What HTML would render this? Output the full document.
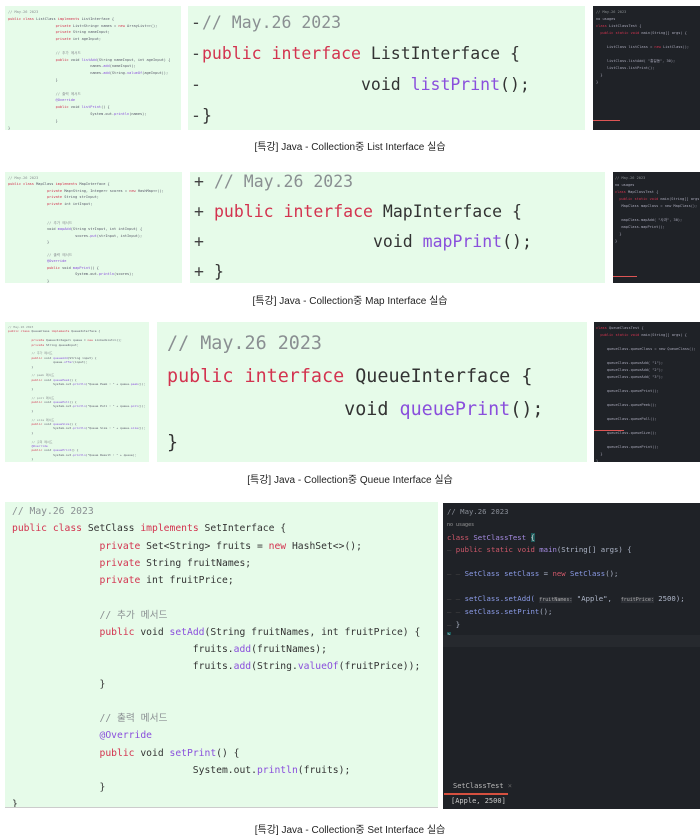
<!DOCTYPE html>
<html><head><meta charset="utf-8"><style>
*{margin:0;padding:0;box-sizing:border-box}
body{width:700px;height:840px;background:#fff;position:relative;overflow:hidden;font-family:"DejaVu Sans Mono","Liberation Mono",monospace}
.p{position:absolute;background:#e6fbe9;overflow:hidden}
.d{position:absolute;background:#1f2227;overflow:hidden}
.t{position:absolute;white-space:pre;line-height:1}
.k{color:#d3334f}.m{color:#8a4fdc}.c{color:#8a8f92}.x{color:#333}
.cap{position:absolute;left:0;width:700px;text-align:center;font-family:"Liberation Sans","Noto Sans CJK KR",sans-serif;font-size:10px;color:#222}
.s{font-size:3.6px;color:#556}
</style></head><body>

<!-- Row 1 -->
<div class="p" style="left:5px;top:6px;width:176px;height:124px">
<div class="t s" style="left:3px;top:3px;line-height:6.8px"><span class="c">// May.26 2023</span>
<span class="k">public class</span> ListClass <span class="k">implements</span> ListInterface {
                      <span class="k">private</span> List&lt;String&gt; names = <span class="k">new</span> ArrayList&lt;&gt;();
                      <span class="k">private</span> String nameInput;
                      <span class="k">private</span> int ageInput;

                      <span class="c">// 추가 메서드</span>
                      <span class="k">public</span> void <span class="m">listAdd</span>(String nameInput, int ageInput) {
                                      names.<span class="m">add</span>(nameInput);
                                      names.<span class="m">add</span>(String.<span class="m">valueOf</span>(ageInput));
                      }

                      <span class="c">// 출력 메서드</span>
                      <span class="m">@Override</span>
                      <span class="k">public</span> void <span class="m">listPrint</span>() {
                                      System.out.<span class="m">println</span>(names);
                      }
}</div></div>
<div class="p" style="left:188px;top:6px;width:397px;height:124px">
<div class="t" style="left:3px;top:1px;font-size:16.5px;line-height:31px;color:#444">-
-
-
-</div>
<div class="t" style="left:14px;top:1px;font-size:16.5px;line-height:31px;color:#444"><span class="c">// May.26 2023</span>
<span class="k">public interface</span> <span class="x">ListInterface {</span>
                <span class="x">void</span> <span class="m">listPrint</span><span class="x">();</span>
<span class="x">}</span></div></div>
<div class="d" style="left:593px;top:6px;width:107px;height:124px">
<div class="t s" style="left:3px;top:3px;line-height:7px;color:#aab"><span class="c">// May.26 2023</span>
no usages
<span class="k">class</span> ListClassTest {
  <span class="k">public static void</span> main(String[] args) {

     ListClass listClass = <span class="k">new</span> ListClass();

     listClass.listAdd( "홍길동", 30);
     listClass.listPrint();
  }
}</div>
<div style="position:absolute;left:0;top:114px;width:27px;height:1px;background:#d55"></div>
</div>
<div class="cap" style="top:138px">[특강] Java - Collection중 List Interface 실습</div>

<!-- Row 2 -->
<div class="p" style="left:5px;top:172px;width:177px;height:111px">
<div class="t s" style="left:3px;top:3px;line-height:6.4px"><span class="c">// May.26 2023</span>
<span class="k">public class</span> MapClass <span class="k">implements</span> MapInterface {
                  <span class="k">private</span> Map&lt;String, Integer&gt; scores = <span class="k">new</span> HashMap&lt;&gt;();
                  <span class="k">private</span> String strInput;
                  <span class="k">private</span> int intInput;


                  <span class="c">// 추가 메서드</span>
                  void <span class="m">mapAdd</span>(String strInput, int intInput) {
                               scores.<span class="m">put</span>(strInput, intInput);
                  }

                  <span class="c">// 출력 메서드</span>
                  <span class="m">@Override</span>
                  <span class="k">public</span> void <span class="m">mapPrint</span>() {
                               System.out.<span class="m">println</span>(scores);
                  }
}</div></div>
<div class="p" style="left:190px;top:172px;width:415px;height:111px">
<div class="t" style="left:4px;top:-5px;font-size:16.5px;line-height:30px;color:#444">+
+
+
+</div>
<div class="t" style="left:24px;top:-5px;font-size:16.5px;line-height:30px;color:#444"><span class="c">// May.26 2023</span>
<span class="k">public interface</span> <span class="x">MapInterface {</span>
                <span class="x">void</span> <span class="m">mapPrint</span><span class="x">();</span>
<span class="x">}</span></div></div>
<div class="d" style="left:613px;top:172px;width:87px;height:111px">
<div class="t s" style="left:2px;top:3px;line-height:7px;color:#aab"><span class="c">// May.26 2023</span>
no usages
<span class="k">class</span> MapClassTest {
  <span class="k">public static void</span> main(String[] args) {
   MapClass mapClass = new MapClass();

   mapClass.mapAdd( "사과", 30);
   mapClass.mapPrint();
  }
}</div>
<div style="position:absolute;left:0;top:104px;width:24px;height:1px;background:#d55"></div>
</div>
<div class="cap" style="top:292px">[특강] Java - Collection중 Map Interface 실습</div>

<!-- Row 3 -->
<div class="p" style="left:5px;top:322px;width:144px;height:140px">
<div class="t s" style="left:3px;top:3px;line-height:4.4px;font-size:3px"><span class="c">// May.26 2023</span>
<span class="k">public class</span> QueueClass <span class="k">implements</span> QueueInterface {

             <span class="k">private</span> Queue&lt;Integer&gt; queue = <span class="k">new</span> LinkedList&lt;&gt;();
             <span class="k">private</span> String queueInput;

             <span class="c">// 추가 메서드</span>
             <span class="k">public</span> void <span class="m">queueAdd</span>(String input) {
                         queue.<span class="m">offer</span>(input);
             }

             <span class="c">// peek 메서드</span>
             <span class="k">public</span> void <span class="m">queuePeek</span>() {
                         System.out.<span class="m">println</span>("Queue Peek : " + queue.<span class="m">peek</span>());
             }

             <span class="c">// poll 메서드</span>
             <span class="k">public</span> void <span class="m">queuePoll</span>() {
                         System.out.<span class="m">println</span>("Queue Poll : " + queue.<span class="m">poll</span>());
             }

             <span class="c">// size 메서드</span>
             <span class="k">public</span> void <span class="m">queueSize</span>() {
                         System.out.<span class="m">println</span>("Queue Size : " + queue.<span class="m">size</span>());
             }

             <span class="c">// 출력 메서드</span>
             <span class="m">@Override</span>
             <span class="k">public</span> void <span class="m">queuePrint</span>() {
                         System.out.<span class="m">println</span>("Queue Result : " + queue);
             }
}</div></div>
<div class="p" style="left:157px;top:322px;width:430px;height:140px">
<div class="t" style="left:10px;top:5px;font-size:18.4px;line-height:33px;color:#444"><span class="c">// May.26 2023</span>
<span class="k">public interface</span> <span class="x">QueueInterface {</span>
                <span class="x">void</span> <span class="m">queuePrint</span><span class="x">();</span>
<span class="x">}</span></div></div>
<div class="d" style="left:594px;top:322px;width:106px;height:140px">
<div class="t s" style="left:2px;top:3px;line-height:7px;color:#aab"><span class="k">class</span> QueueClassTest {
  <span class="k">public static void</span> main(String[] args) {

     queueClass.queueClass = new QueueClass();

     queueClass.queueAdd( "1");
     queueClass.queueAdd( "2");
     queueClass.queueAdd( "3");

     queueClass.queuePrint();

     queueClass.queuePeek();

     queueClass.queuePoll();

     queueClass.queueSize();

     queueClass.queuePrint();
  }
}
 QueueClassTest
 Queue Result : [1, 2, 3]
 Queue Peek : 1
 Queue Poll : 1
 Queue Size : 2
 Queue Result : [2, 3]</div>
<div style="position:absolute;left:0;top:108px;width:30px;height:1px;background:#d55"></div>
</div>
<div class="cap" style="top:471px">[특강] Java - Collection중 Queue Interface 실습</div>

<!-- Row 4 -->
<div class="p" style="left:5px;top:502px;width:433px;height:306px;border-bottom:1px solid #ccc">
<div class="t" style="left:7px;top:1px;font-size:9.7px;line-height:17.25px;color:#333"><span class="c">// May.26 2023</span>
<span class="k">public class</span> SetClass <span class="k">implements</span> SetInterface {
               <span class="k">private</span> Set&lt;String&gt; fruits = <span class="k">new</span> HashSet&lt;&gt;();
               <span class="k">private</span> String fruitNames;
               <span class="k">private</span> int fruitPrice;

               <span class="c">// 추가 메서드</span>
               <span class="k">public</span> void <span class="m">setAdd</span>(String fruitNames, int fruitPrice) {
                               fruits.<span class="m">add</span>(fruitNames);
                               fruits.<span class="m">add</span>(String.<span class="m">valueOf</span>(fruitPrice));
               }

               <span class="c">// 출력 메서드</span>
               <span class="m">@Override</span>
               <span class="k">public</span> void <span class="m">setPrint</span>() {
                               System.out.<span class="m">println</span>(fruits);
               }
}</div></div>
<div class="d" style="left:443px;top:503px;width:257px;height:306px">
<div class="t" style="left:4px;top:3px;font-size:7.3px;line-height:12.3px;color:#aeb6c8"><span style="color:#8a8f98">// May.26 2023</span>
<span style="font-size:5px;color:#999">no usages</span>
<span style="color:#d0586a">class</span> <span style="color:#a48ae0">SetClassTest</span> <span style="background:#1d5a5a;color:#ddd">{</span>
<span style="color:#444">— </span><span style="color:#d0586a">public static void</span> <span style="color:#a48ae0">main</span>(String[] args) {

<span style="color:#444">— — </span><span style="color:#8c9ce8">SetClass setClass</span> = <span style="color:#d0586a">new</span> <span style="color:#8c9ce8">SetClass</span>();

<span style="color:#444">— — </span><span style="color:#8c9ce8">setClass.setAdd(</span> <span style="font-size:5px;background:#2d3036;color:#aaa">fruitNames:</span> "Apple",  <span style="font-size:5px;background:#2d3036;color:#aaa">fruitPrice:</span> 2500);
<span style="color:#444">— — </span><span style="color:#8c9ce8">setClass.setPrint</span>();
<span style="color:#444">— </span>}
<span style="background:#1d5a5a;color:#ddd">}</span></div>
<div style="position:absolute;left:0;top:132px;width:257px;height:12px;background:#26292e"></div>
<div class="t" style="left:10px;top:280px;font-size:7px;color:#bbb">SetClassTest <span style="color:#666">×</span></div>
<div style="position:absolute;left:1px;top:290px;width:64px;height:2px;background:#d5503f"></div>
<div class="t" style="left:8px;top:295px;font-size:7px;color:#ccc">[Apple, 2500]</div>
</div>
<div class="cap" style="top:821px">[특강] Java - Collection중 Set Interface 실습</div>
</body></html>
